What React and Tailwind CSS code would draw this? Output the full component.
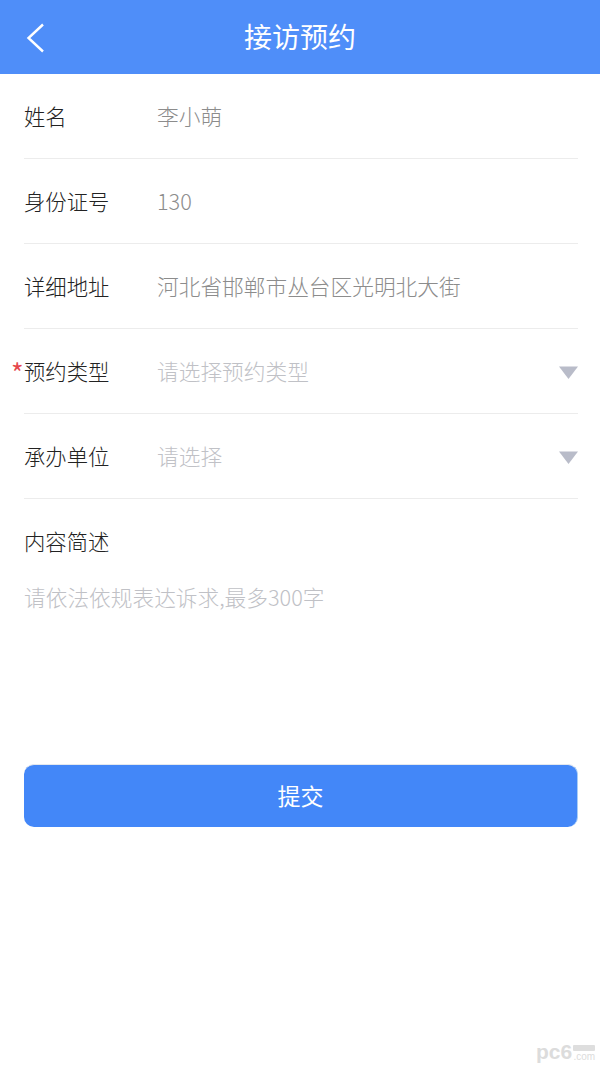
import React from "react";

function Arrow() {
  return (
    <svg width="19" height="13" viewBox="0 0 19 13" className="mt-[3px] shrink-0">
      <path d="M0 0.5 L19 0.5 L9.5 13 Z" fill="#b9bcc9" />
    </svg>
  );
}

function Row({ label, value, muted, arrow, required }) {
  return (
    <div className="relative flex h-[85px] items-center border-b border-[#ececec] pb-[1px]">
      {required && (
        <span className="absolute left-[-13px] top-[30px] text-[27px] leading-[27px] text-[#e5484d]">*</span>
      )}
      <div className="w-[133px] shrink-0 text-[21.33px] font-light leading-[30px] text-[#222222]">{label}</div>
      <div className={`flex-1 text-[21.7px] font-light leading-[30px] ${muted ? "text-[#c0c1c6]" : "text-[#8c8c8c]"}`}>{value}</div>
      {arrow && <Arrow />}
    </div>
  );
}

export default function App() {
  return (
    <div className="relative flex h-[1067px] w-[600px] flex-col overflow-hidden bg-white font-['Noto_Sans_CJK_SC','Noto_Sans',sans-serif]">
      <header className="relative flex h-[74px] shrink-0 items-center justify-center bg-[#4f8ef9] pb-[3px]">
        <svg width="20" height="30" viewBox="0 0 20 30" className="absolute left-[26px] top-[23px]">
          <path d="M17 1.5 L2.5 15 L17 28.5" fill="none" stroke="#ffffff" strokeWidth="2.4" />
        </svg>
        <h1 className="text-[28px] font-normal leading-[40px] text-white">接访预约</h1>
      </header>
      <main className="flex flex-col pl-[24px] pr-[22px]">
        <Row label="姓名" value="李小萌" />
        <Row label="身份证号" value="130" />
        <Row label="详细地址" value="河北省邯郸市丛台区光明北大街" />
        <Row label="预约类型" value="请选择预约类型" muted arrow required />
        <Row label="承办单位" value="请选择" muted arrow />
        <div className="pt-[27px] text-[21.33px] font-light leading-[30px] text-[#222222]">内容简述</div>
        <div className="mt-[26px] h-[153px] text-[21.7px] font-light leading-[30px] text-[#c0c1c6]">请依法依规表达诉求,最多300字</div>
        <button className="mt-[29px] h-[63px] rounded-[10px] border-t border-r border-t-[#e4e8ee] border-r-[#a9cdf5] bg-[#4387f8] pb-[3px] text-[23px] font-normal leading-[32px] text-white">
          提交
        </button>
      </main>
      <div className="absolute left-[536px] top-[1039px] flex items-start text-[#dcdcdc]">
        <span className="font-['Liberation_Sans',sans-serif] text-[21px] font-bold leading-[26px]">pc6</span>
        <div className="ml-[1px] mt-[6px] flex flex-col items-end">
          <span className="h-[6px] w-[22px] rounded-[1px] bg-[#dedede]" />
          <span className="font-['Liberation_Sans',sans-serif] text-[10px] leading-[12px]">.com</span>
        </div>
      </div>
    </div>
  );
}
